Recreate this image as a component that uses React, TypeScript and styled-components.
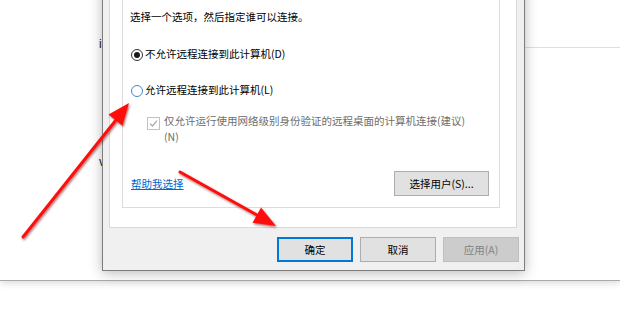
import styled, { createGlobalStyle } from "styled-components";

const GlobalStyle = createGlobalStyle`
  html, body {
    margin: 0;
    padding: 0;
    background: #ffffff;
  }
  body {
    font-family: "Noto Sans CJK SC", "Microsoft YaHei", "Noto Sans", sans-serif;
    font-size: 10.5px;
    color: #000;
  }
`;

const Desktop = styled.div`
  position: relative;
  width: 620px;
  height: 309px;
  overflow: hidden;
  background: #ffffff;
`;

const BackWindow = styled.div`
  height: 280px;
  display: flex;
  background: #ffffff;
  border-bottom: 1px solid #a9a9a9;
  box-shadow: 0 3px 6px rgba(0, 0, 0, 0.12);
`;

const BackLeft = styled.div`
  width: 102px;
  display: flex;
  flex-direction: column;
  padding: 37px 0 0 99px;
  gap: 104px;
  box-sizing: border-box;
  font-family: "Liberation Sans", Arial, sans-serif;
  font-size: 12px;
  color: #222;
  white-space: nowrap;
`;

const BackRight = styled.div`
  flex: 1;
  display: flex;
  flex-direction: column;
`;

const BackHeader = styled.div`
  height: 47px;
  border-bottom: 1px solid #dedede;
`;

const Dialog = styled.div`
  position: absolute;
  left: 102px;
  top: -30px;
  width: 423px;
  height: 301px;
  box-sizing: border-box;
  display: flex;
  flex-direction: column;
  background: #f0f0f0;
  border: 1px solid #7d7d7d;
  box-shadow: 0 2px 12px rgba(0, 0, 0, 0.28);
`;

const TabPanel = styled.div`
  flex: 1;
  margin: 0 7px 0 6px;
  padding: 9px 16px 19px 12px;
  background: #ffffff;
  border: 1px solid #d9d9d9;
  border-top: none;
  display: flex;
  flex-direction: column;
`;

const GroupBox = styled.div`
  flex: 1;
  border: 1px solid #dcdcdc;
  padding: 28px 10px 11px 7px;
  display: flex;
  flex-direction: column;
`;

const Line = styled.div`
  line-height: 16px;
  height: 16px;
  white-space: nowrap;
`;

const RadioRow = styled.label<{ $gap: number }>`
  display: flex;
  align-items: center;
  gap: 2px;
  margin: ${(p) => p.$gap}px 0 0 1px;
  height: 16px;
  line-height: 16px;
  white-space: nowrap;
`;

const RadioDot = styled.span<{ $checked?: boolean; $hover?: boolean }>`
  width: 12px;
  height: 12px;
  box-sizing: border-box;
  border-radius: 50%;
  border: 1px solid ${(p) => (p.$hover ? "#3d8ad6" : "#333333")};
  display: flex;
  align-items: center;
  justify-content: center;
  margin-top: ${(p) => (p.$hover ? 2 : 1)}px;
  &::after {
    content: "";
    width: 6px;
    height: 6px;
    border-radius: 50%;
    background: ${(p) => (p.$checked ? "#1a1a1a" : "transparent")};
  }
`;

const CheckRow = styled.div`
  display: flex;
  align-items: flex-start;
  gap: 4px;
  margin: 15px 0 0 17px;
  color: #6d6d6d;
  line-height: 16px;
`;

const CheckBox = styled.span`
  width: 11px;
  height: 11px;
  margin-top: 4px;
  flex-shrink: 0;
  border: 1px solid #c2c2c2;
  background: #ffffff;
  display: flex;
  align-items: center;
  justify-content: center;
`;

const BottomRow = styled.div`
  display: flex;
  align-items: center;
  justify-content: space-between;
  margin-top: 26px;
  padding-left: 1px;
`;

const HelpLink = styled.a`
  color: #0066cc;
  text-decoration: underline;
  cursor: pointer;
`;

const Button = styled.button<{ $primary?: boolean; $disabled?: boolean; $width?: number }>`
  width: ${(p) => p.$width ?? 76}px;
  height: 25px;
  box-sizing: border-box;
  padding: 0;
  font-family: inherit;
  font-size: 10.5px;
  background: ${(p) => (p.$disabled ? "#cccccc" : "#e1e1e1")};
  color: ${(p) => (p.$disabled ? "#838383" : "#000000")};
  border: ${(p) =>
    p.$primary ? "2px solid #0078d7" : p.$disabled ? "1px solid #bfbfbf" : "1px solid #adadad"};
`;

const ButtonRow = styled.div`
  height: 42px;
  box-sizing: border-box;
  padding: 9px 5px 8px;
  display: flex;
  justify-content: flex-end;
  align-items: flex-start;
  gap: 7px;
`;

const ArrowLayer = styled.svg`
  position: absolute;
  left: 0;
  top: 0;
  pointer-events: none;
`;

function Arrow({ tail, base, head }: { tail: [number, number]; base: [number, number]; head: string }) {
  return (
    <g filter="url(#shade)">
      <line x1={tail[0]} y1={tail[1]} x2={base[0]} y2={base[1]} stroke="#ff1010" strokeWidth={3} strokeLinecap="round" />
      <polygon points={head} fill="#ff1010" />
    </g>
  );
}

export default function App() {
  return (
    <>
      <GlobalStyle />
      <Desktop>
        <BackWindow>
          <BackLeft>
            <span>in</span>
            <span>v</span>
          </BackLeft>
          <BackRight>
            <BackHeader />
          </BackRight>
        </BackWindow>

        <Dialog>
          <TabPanel>
            <GroupBox>
              <Line>选择一个选项，然后指定谁可以连接。</Line>
              <RadioRow $gap={21}>
                <RadioDot $checked />
                不允许远程连接到此计算机(D)
              </RadioRow>
              <RadioRow $gap={20}>
                <RadioDot $hover />
                允许远程连接到此计算机(L)
              </RadioRow>
              <CheckRow>
                <CheckBox>
                  <svg width="9" height="9" viewBox="0 0 9 9">
                    <path d="M1 4.6 L3.5 7 L8 1.6" fill="none" stroke="#a8a8a8" strokeWidth="1.2" />
                  </svg>
                </CheckBox>
                <div>
                  <div>仅允许运行使用网络级别身份验证的远程桌面的计算机连接(建议)</div>
                  <div>(N)</div>
                </div>
              </CheckRow>
              <BottomRow>
                <HelpLink>帮助我选择</HelpLink>
                <Button $width={95}>选择用户(S)...</Button>
              </BottomRow>
            </GroupBox>
          </TabPanel>
          <ButtonRow>
            <Button $primary>确定</Button>
            <Button>取消</Button>
            <Button $disabled>应用(A)</Button>
          </ButtonRow>
        </Dialog>

        <ArrowLayer width="620" height="309" viewBox="0 0 620 309">
          <defs>
            <filter id="shade" x="-20%" y="-20%" width="140%" height="140%">
              <feDropShadow dx="1" dy="1.5" stdDeviation="1.2" floodColor="#600000" floodOpacity="0.55" />
            </filter>
          </defs>
          <Arrow tail={[23, 237]} base={[116, 120]} head="129,103 122.5,125.8 108.5,114.6" />
          <Arrow tail={[180, 172]} base={[257, 215]} head="276,226 252.5,222.8 261,207.6" />
        </ArrowLayer>
      </Desktop>
    </>
  );
}
